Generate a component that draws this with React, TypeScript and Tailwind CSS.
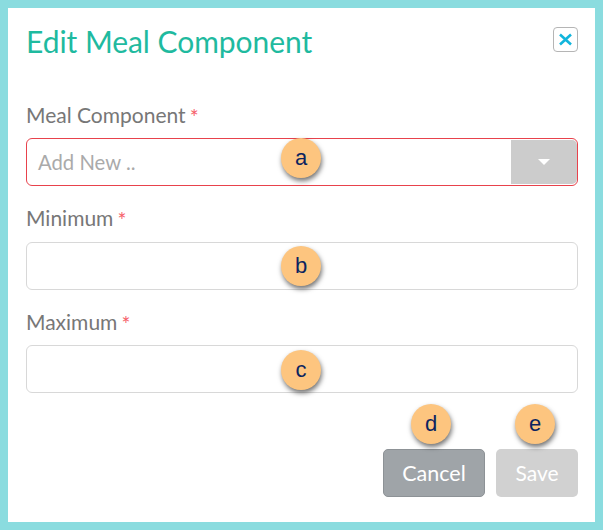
import React from 'react';

const Badge: React.FC<{ letter: string; className: string }> = ({ letter, className }) => (
  <span
    className={`absolute flex h-10 w-10 items-center justify-center rounded-full bg-[#fdc57f] pb-px text-[22px] leading-none text-[#0c2460] shadow-[1px_3px_5px_rgba(0,0,0,0.55)] ${className}`}
    style={{ fontFamily: '"Liberation Sans", Arial, sans-serif' }}
  >
    {letter}
  </span>
);

const FieldLabel: React.FC<{ text: string; gap: string; height: string }> = ({ text, gap, height }) => (
  <label className={`flex items-start text-[21px] leading-[20px] text-[#777777] ${height}`}>
    {text}
    <span className={`${gap} pt-[2px] text-[21px] leading-[20px] text-[#f65f6b]`}>*</span>
  </label>
);

const App: React.FC = () => {
  return (
    <div
      className="h-[530px] w-[603px] border-8 border-[#8adcdf] bg-white"
      style={{ fontFamily: 'Lato, "Open Sans", sans-serif' }}
    >
      <div className="relative flex h-full flex-col pl-[18px] pr-[17px]">
        <div className="flex items-start justify-between pt-[15px]">
          <h2 className="text-[30px] leading-[36px] tracking-[-0.05px] text-[#1fba9f]">Edit Meal Component</h2>
          <button
            aria-label="Close"
            className="mt-[4px] flex h-[25px] w-[25px] items-center justify-center rounded-[4px] border border-[#b5b5b5] text-[#11b5dc]"
          >
            <svg width="15" height="15" viewBox="0 0 15 15" fill="none" stroke="currentColor" strokeWidth="2.6">
              <path d="M2 2.5 L13 12.5 M13 2.5 L2 12.5" />
            </svg>
          </button>
        </div>

        <div className="mt-[46px]">
          <FieldLabel text="Meal Component" gap="ml-[4px]" height="h-[33px]" />
          <div className="flex h-[48px] items-stretch overflow-hidden rounded-[6px] border border-[#e8424c] bg-white">
            <div className="flex flex-1 items-center pl-[11px] text-[20.3px] text-[#aaaaaa]">Add New ..</div>
            <div className="my-px flex w-[66px] items-center justify-center rounded-r-[5px] bg-[#cccccc]">
              <span className="h-0 w-0 border-x-[6px] border-t-[6px] border-x-transparent border-t-white" />
            </div>
          </div>
        </div>

        <div className="mt-[22px]">
          <FieldLabel text="Minimum" gap="ml-[4px]" height="h-[34px]" />
          <input className="block h-[48px] w-full rounded-[6px] border border-[#d8d8d8] bg-white" />
        </div>

        <div className="mt-[22px]">
          <FieldLabel text="Maximum" gap="ml-[4px]" height="h-[33px]" />
          <input className="block h-[48px] w-full rounded-[6px] border border-[#d8d8d8] bg-white" />
        </div>

        <div className="mt-[56px] flex justify-end gap-[11px]">
          <button className="h-[48px] w-[102px] rounded-[5px] border border-[#8d9296] bg-[#9fa4a8] text-[21.5px] text-white">
            Cancel
          </button>
          <button className="h-[48px] w-[82px] rounded-[5px] bg-[#d1d1d1] text-[21px] text-white">Save</button>
        </div>

        <Badge letter="a" className="left-[273px] top-[130px]" />
        <Badge letter="b" className="left-[273px] top-[238px]" />
        <Badge letter="c" className="left-[273px] top-[342px]" />
        <Badge letter="d" className="left-[403px] top-[396px]" />
        <Badge letter="e" className="left-[507px] top-[396px]" />
      </div>
    </div>
  );
};

export default App;
